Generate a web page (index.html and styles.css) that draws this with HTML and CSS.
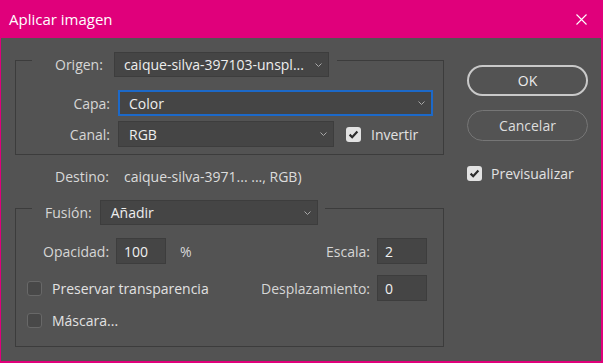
FILE: index.html
```html
<!DOCTYPE html>
<html>
<head lang="es">
    <meta charset="UTF-8">
    <title>Aplicar imagen</title>
    <link rel="stylesheet" href="styles.css">
</head>
<body>
    <div class="dialog">
        <div class="titlebar">
            <span class="title">Aplicar imagen</span>
            <svg class="close" width="11" height="11" viewBox="0 0 11 11">
                <path d="M0.5 0.5 L10.5 10.5 M10.5 0.5 L0.5 10.5" stroke="#fff" stroke-width="1.1" fill="none"/>
            </svg>
        </div>

        <div class="content">
            <div class="main">
                <fieldset class="group group-source">
                    <legend class="group-head head-source">
                        <span class="lbl">Origen:</span>
                        <div class="select sel-origin">
                            <span>caique-silva-397103-unspl...</span>
                            <svg class="chev" width="7" height="4" viewBox="0 0 7 4"><path d="M0.5 0.5 L3.5 3.5 L6.5 0.5" stroke="#a8a8a8" fill="none"/></svg>
                        </div>
                    </legend>
                    <div class="src-grid">
                        <span class="lbl right">Capa:</span>
                        <div class="select sel-capa">
                            <span>Color</span>
                            <svg class="chev" width="7" height="4" viewBox="0 0 7 4"><path d="M0.5 0.5 L3.5 3.5 L6.5 0.5" stroke="#a8a8a8" fill="none"/></svg>
                        </div>
                        <span class="lbl right">Canal:</span>
                        <div class="canal-row">
                            <div class="select sel-canal">
                                <span>RGB</span>
                                <svg class="chev" width="7" height="4" viewBox="0 0 7 4"><path d="M0.5 0.5 L3.5 3.5 L6.5 0.5" stroke="#a8a8a8" fill="none"/></svg>
                            </div>
                            <span class="check on">
                                <svg width="15" height="15" viewBox="0 0 15 15"><path d="M3.6 7.6 L6.2 10.2 L11.4 4.6" stroke="#2b2b2b" stroke-width="2.2" fill="none"/></svg>
                            </span>
                            <span class="check-text">Invertir</span>
                        </div>
                    </div>
                </fieldset>

                <div class="dest">
                    <span class="dest-lbl">Destino:</span>
                    <span class="dest-val">caique-silva-3971... ..., RGB)</span>
                </div>

                <fieldset class="group group-blend">
                    <legend class="group-head head-blend">
                        <span class="lbl">Fusión:</span>
                        <div class="select sel-blend">
                            <span>Añadir</span>
                            <svg class="chev" width="7" height="4" viewBox="0 0 7 4"><path d="M0.5 0.5 L3.5 3.5 L6.5 0.5" stroke="#a8a8a8" fill="none"/></svg>
                        </div>
                    </legend>

                    <div class="row row-first">
                        <div class="pair">
                            <span class="lbl">Opacidad:</span>
                            <span class="field">100</span>
                            <span class="unit">%</span>
                        </div>
                        <div class="pair">
                            <span class="lbl">Escala:</span>
                            <span class="field">2</span>
                        </div>
                    </div>

                    <div class="row row-second">
                        <div class="pair">
                            <span class="check off"></span>
                            <span class="check-text">Preservar transparencia</span>
                        </div>
                        <div class="pair">
                            <span class="lbl">Desplazamiento:</span>
                            <span class="field">0</span>
                        </div>
                    </div>

                    <div class="row row-third">
                        <div class="pair">
                            <span class="check off"></span>
                            <span class="check-text">Máscara...</span>
                        </div>
                    </div>
                </fieldset>
            </div>

            <div class="side">
                <div class="btn btn-ok">OK</div>
                <div class="btn btn-cancel">Cancelar</div>
                <div class="preview">
                    <span class="check on">
                        <svg width="15" height="15" viewBox="0 0 15 15"><path d="M3.6 7.6 L6.2 10.2 L11.4 4.6" stroke="#2b2b2b" stroke-width="2.2" fill="none"/></svg>
                    </span>
                    <span class="check-text">Previsualizar</span>
                </div>
            </div>
        </div>
    </div>
</body>
</html>
```

FILE: styles.css
```css
*{
    margin: 0;
    padding: 0;
    box-sizing: border-box;
}
body{
    background: #535353;
    font-family: "Open Sans", "Noto Sans", sans-serif;
    font-size: 14px;
    color: #d8d8d8;
}

/* window frame */
.dialog{
    width: 603px;
    height: 363px;
    border: solid #e0007b;
    border-width: 0 2px 2px 1px;
    background: #535353;
    display: flex;
    flex-direction: column;
}
.titlebar{
    height: 38px;
    flex: none;
    background: #e0007b;
    display: flex;
    align-items: center;
    justify-content: space-between;
    padding: 0 14px 0 8px;
}
.title{
    color: #fff;
    font-size: 15px;
}
.close{
    display: block;
}

.content{
    display: flex;
    padding-top: 5px;
}
.main{
    width: 443px;
    padding-left: 14px;
}

/* group boxes */
.group{
    width: 429px;
    border: 1px solid #3c3c3c;
    min-width: 0;
}
.group-head{
    display: flex;
    align-items: center;
    margin-left: 16px;
    padding-top: 9px;
}
.head-source{
    padding-left: 23px;
    padding-right: 8px;
}
.head-blend{
    padding-left: 13px;
    padding-right: 7px;
}
.lbl{
    color: #d6d6d6;
    white-space: nowrap;
}
.right{
    text-align: right;
}

.select{
    height: 25px;
    background: #454545;
    border: 1px solid #3d3d3d;
    color: #eeeeee;
    display: flex;
    align-items: center;
    justify-content: space-between;
    padding: 0 6px 0 9px;
    white-space: nowrap;
}
.chev{
    display: block;
    flex: none;
}
.sel-origin{
    width: 215px;
    margin-left: 11px;
}
.sel-blend{
    width: 218px;
    margin-left: 8px;
    padding-left: 10px;
}
.sel-capa{
    width: 315px;
    height: 26px;
    border: 2px solid #1c69c9;
    padding-left: 9px;
}
.sel-canal{
    width: 216px;
    height: 26px;
    padding-left: 10px;
}

.src-grid{
    display: grid;
    grid-template-columns: 94px auto;
    column-gap: 8px;
    row-gap: 5px;
    align-items: center;
    margin-top: 13px;
    padding-bottom: 7px;
}
.canal-row{
    display: flex;
    align-items: center;
}
.canal-row .check{
    margin-left: 12px;
}

/* checkboxes */
.check{
    width: 15px;
    height: 15px;
    border-radius: 3px;
    flex: none;
    display: block;
}
.check svg{
    display: block;
}
.check.on{
    background: #e2e2e2;
}
.check.off{
    background: #484848;
    border: 1px solid #686868;
}
.check-text{
    margin-left: 10px;
    color: #e2e2e2;
    white-space: nowrap;
}

.dest{
    display: flex;
    height: 20px;
    line-height: 20px;
    margin-top: 12px;
    margin-bottom: 4px;
    padding-left: 40px;
}
.dest-lbl{
    width: 69px;
}
.dest-val{
    color: #dcdcdc;
}

/* blend rows */
.row{
    display: flex;
    align-items: center;
    justify-content: space-between;
    padding: 0 16px 0 11px;
}
.row-first{
    margin-top: 13px;
    padding-left: 27px;
}
.row-second{
    margin-top: 11px;
}
.row-third{
    height: 20px;
    margin-top: 9px;
    margin-bottom: 16px;
}
.pair{
    display: flex;
    align-items: center;
}
.field{
    width: 50px;
    height: 26px;
    background: #454545;
    border: 1px solid #3d3d3d;
    color: #f0f0f0;
    display: flex;
    align-items: center;
    padding-left: 7px;
    margin-left: 7px;
}
.unit{
    margin-left: 14px;
}

/* right column */
.side{
    margin-left: 23px;
    padding-top: 22px;
    display: flex;
    flex-direction: column;
}
.btn{
    width: 121px;
    height: 31px;
    border-radius: 16px;
    display: flex;
    align-items: center;
    justify-content: center;
    color: #ececec;
}
.btn-ok{
    border: 2px solid #c9c9c9;
}
.btn-cancel{
    border: 1px solid #767676;
    margin-top: 14px;
    color: #dedede;
}
.preview{
    display: flex;
    align-items: center;
    margin-top: 23px;
}
.preview .check-text{
    margin-left: 9px;
}
```
